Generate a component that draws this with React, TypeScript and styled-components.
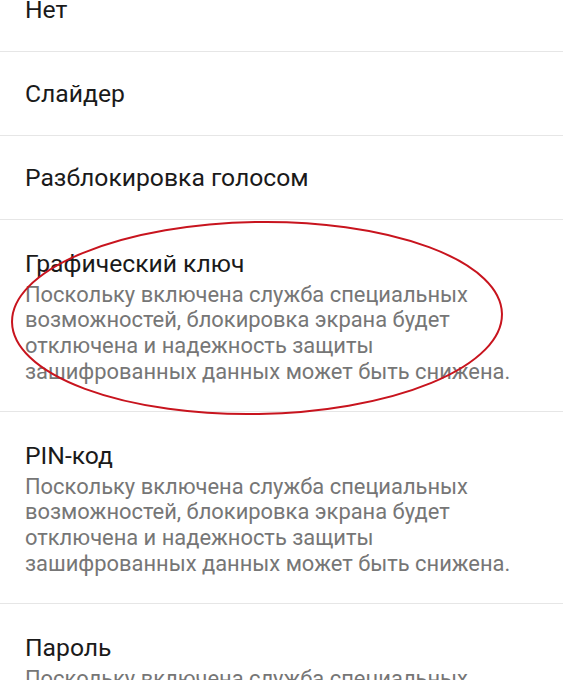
import styled, { createGlobalStyle } from 'styled-components';

const GlobalStyle = createGlobalStyle`
  html, body {
    margin: 0;
    padding: 0;
    background: #ffffff;
    overflow: hidden;
  }
  body {
    font-family: Roboto, "Noto Sans", "Liberation Sans", sans-serif;
  }
`;

const List = styled.div`
  position: relative;
  margin-top: -32px;
  width: 563px;
`;

const Item = styled.div<{ $tall?: boolean }>`
  display: flex;
  flex-direction: column;
  justify-content: center;
  box-sizing: border-box;
  height: ${(p) => (p.$tall ? 192 : 84)}px;
  padding: ${(p) => (p.$tall ? '2px' : '0')} 25px 0;
  border-bottom: 1.5px solid #e6e6e6;
`;

const Title = styled.div`
  font-size: 24.7px;
  line-height: 30px;
  color: #1a1a1a;
`;

const Summary = styled.div`
  font-size: 21.9px;
  line-height: 25.6px;
  color: #767676;
  margin-top: 3px;
  white-space: nowrap;
`;

const Mark = styled.svg`
  position: absolute;
  left: 0;
  top: 0;
  pointer-events: none;
`;

const lines = [
  'Поскольку включена служба специальных',
  'возможностей, блокировка экрана будет',
  'отключена и надежность защиты',
  'зашифрованных данных может быть снижена.',
];

const items: { title: string; summary?: string[] }[] = [
  { title: 'Нет' },
  { title: 'Слайдер' },
  { title: 'Разблокировка голосом' },
  { title: 'Графический ключ', summary: lines },
  { title: 'PIN-код', summary: lines },
  { title: 'Пароль', summary: lines },
];

const App = () => {
  return (
    <>
      <GlobalStyle />
      <List>
        {items.map((item) => (
          <Item key={item.title} $tall={!!item.summary}>
            <Title>{item.title}</Title>
            {item.summary && (
              <Summary>
                {item.summary.map((line) => (
                  <div key={line}>{line}</div>
                ))}
              </Summary>
            )}
          </Item>
        ))}
        <Mark width="563" height="760" viewBox="0 0 563 760">
          <ellipse
            cx="257"
            cy="350"
            rx="245"
            ry="96"
            fill="none"
            stroke="#c8141e"
            strokeWidth="2"
            transform="rotate(-1 257 350)"
          />
        </Mark>
      </List>
    </>
  );
};

export default App;
